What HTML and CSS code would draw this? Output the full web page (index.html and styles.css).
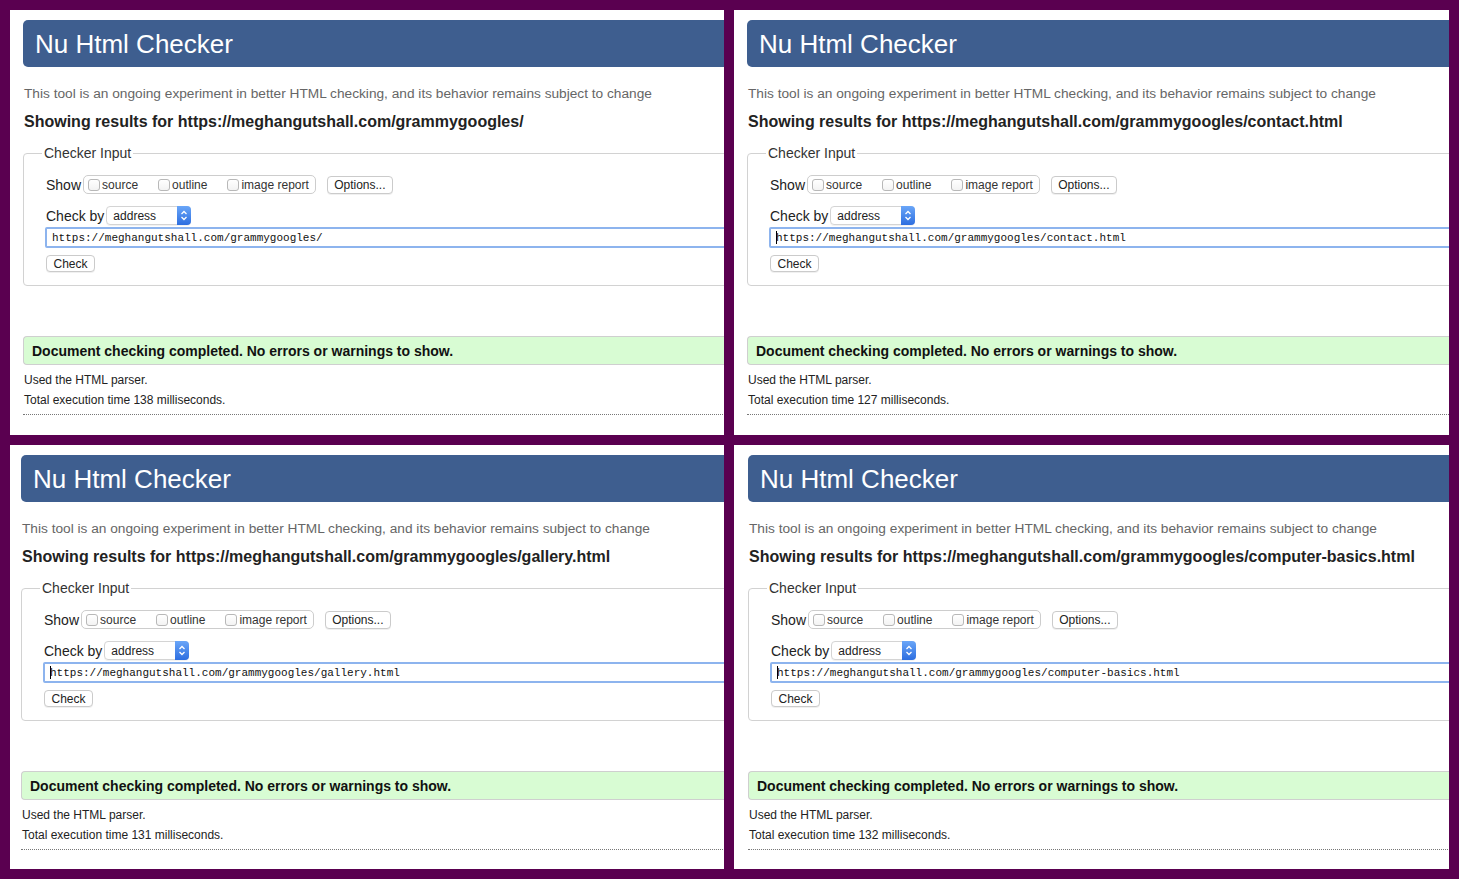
FILE: index.html
```html
<!DOCTYPE html>
<html lang="en">
<head>
<meta charset="utf-8">
<title>Nu Html Checker results</title>
<link rel="stylesheet" href="styles.css">
</head>
<body>
<main class="grid">

  <section class="panel p-tl">
    <div class="page">
      <header class="masthead"><h1>Nu Html Checker</h1></header>
      <p class="tagline">This tool is an ongoing experiment in better HTML checking, and its behavior remains subject to change</p>
      <h2 class="results">Showing results for https://meghangutshall.com/grammygoogles/</h2>
      <fieldset class="checker">
        <legend>Checker Input</legend>
        <div class="row">
          <span class="lbl">Show</span>
          <span class="group">
            <span class="opt"><span class="cb"></span>source</span>
            <span class="opt"><span class="cb"></span>outline</span>
            <span class="opt"><span class="cb"></span>image report</span>
          </span>
          <span class="btn opts">Options...</span>
        </div>
        <div class="row by-row">
          <span class="lbl">Check by</span>
          <span class="select">address<span class="stepper"><svg width="8" height="13" viewBox="0 0 8 13"><path d="M1.5 5 L4 2.5 L6.5 5 M1.5 8 L4 10.5 L6.5 8" fill="none" stroke="#fff" stroke-width="1.3"/></svg></span></span>
        </div>
        <div class="urlbox">https://meghangutshall.com/grammygoogles/</div>
        <span class="btn check">Check</span>
      </fieldset>
      <div class="success">Document checking completed. No errors or warnings to show.</div>
      <div class="details">
        <p>Used the HTML parser.</p>
        <p>Total execution time 138 milliseconds.</p>
      </div>
    </div>
  </section>

  <section class="panel p-tr">
    <div class="page">
      <header class="masthead"><h1>Nu Html Checker</h1></header>
      <p class="tagline">This tool is an ongoing experiment in better HTML checking, and its behavior remains subject to change</p>
      <h2 class="results">Showing results for https://meghangutshall.com/grammygoogles/contact.html</h2>
      <fieldset class="checker">
        <legend>Checker Input</legend>
        <div class="row">
          <span class="lbl">Show</span>
          <span class="group">
            <span class="opt"><span class="cb"></span>source</span>
            <span class="opt"><span class="cb"></span>outline</span>
            <span class="opt"><span class="cb"></span>image report</span>
          </span>
          <span class="btn opts">Options...</span>
        </div>
        <div class="row by-row">
          <span class="lbl">Check by</span>
          <span class="select">address<span class="stepper"><svg width="8" height="13" viewBox="0 0 8 13"><path d="M1.5 5 L4 2.5 L6.5 5 M1.5 8 L4 10.5 L6.5 8" fill="none" stroke="#fff" stroke-width="1.3"/></svg></span></span>
        </div>
        <div class="urlbox"><span class="caret"></span>https://meghangutshall.com/grammygoogles/contact.html</div>
        <span class="btn check">Check</span>
      </fieldset>
      <div class="success">Document checking completed. No errors or warnings to show.</div>
      <div class="details">
        <p>Used the HTML parser.</p>
        <p>Total execution time 127 milliseconds.</p>
      </div>
    </div>
  </section>

  <section class="panel p-bl">
    <div class="page">
      <header class="masthead"><h1>Nu Html Checker</h1></header>
      <p class="tagline">This tool is an ongoing experiment in better HTML checking, and its behavior remains subject to change</p>
      <h2 class="results">Showing results for https://meghangutshall.com/grammygoogles/gallery.html</h2>
      <fieldset class="checker">
        <legend>Checker Input</legend>
        <div class="row">
          <span class="lbl">Show</span>
          <span class="group">
            <span class="opt"><span class="cb"></span>source</span>
            <span class="opt"><span class="cb"></span>outline</span>
            <span class="opt"><span class="cb"></span>image report</span>
          </span>
          <span class="btn opts">Options...</span>
        </div>
        <div class="row by-row">
          <span class="lbl">Check by</span>
          <span class="select">address<span class="stepper"><svg width="8" height="13" viewBox="0 0 8 13"><path d="M1.5 5 L4 2.5 L6.5 5 M1.5 8 L4 10.5 L6.5 8" fill="none" stroke="#fff" stroke-width="1.3"/></svg></span></span>
        </div>
        <div class="urlbox"><span class="caret"></span>https://meghangutshall.com/grammygoogles/gallery.html</div>
        <span class="btn check">Check</span>
      </fieldset>
      <div class="success">Document checking completed. No errors or warnings to show.</div>
      <div class="details">
        <p>Used the HTML parser.</p>
        <p>Total execution time 131 milliseconds.</p>
      </div>
    </div>
  </section>

  <section class="panel p-br">
    <div class="page">
      <header class="masthead"><h1>Nu Html Checker</h1></header>
      <p class="tagline">This tool is an ongoing experiment in better HTML checking, and its behavior remains subject to change</p>
      <h2 class="results">Showing results for https://meghangutshall.com/grammygoogles/computer-basics.html</h2>
      <fieldset class="checker">
        <legend>Checker Input</legend>
        <div class="row">
          <span class="lbl">Show</span>
          <span class="group">
            <span class="opt"><span class="cb"></span>source</span>
            <span class="opt"><span class="cb"></span>outline</span>
            <span class="opt"><span class="cb"></span>image report</span>
          </span>
          <span class="btn opts">Options...</span>
        </div>
        <div class="row by-row">
          <span class="lbl">Check by</span>
          <span class="select">address<span class="stepper"><svg width="8" height="13" viewBox="0 0 8 13"><path d="M1.5 5 L4 2.5 L6.5 5 M1.5 8 L4 10.5 L6.5 8" fill="none" stroke="#fff" stroke-width="1.3"/></svg></span></span>
        </div>
        <div class="urlbox"><span class="caret"></span>https://meghangutshall.com/grammygoogles/computer-basics.html</div>
        <span class="btn check">Check</span>
      </fieldset>
      <div class="success">Document checking completed. No errors or warnings to show.</div>
      <div class="details">
        <p>Used the HTML parser.</p>
        <p>Total execution time 132 milliseconds.</p>
      </div>
    </div>
  </section>

</main>
</body>
</html>
```

FILE: styles.css
```css
html, body {
  margin: 0;
  padding: 0;
}
body {
  background: #5a0050;
  font-family: "Liberation Sans", Arial, Helvetica, sans-serif;
  color: #222;
}
.grid {
  box-sizing: border-box;
  width: 1459px;
  height: 879px;
  padding: 10px;
  display: grid;
  grid-template-columns: 714px 715px;
  grid-template-rows: 425px 424px;
  gap: 10px;
}
.panel {
  background: #fff;
  overflow: hidden;
  padding-top: 10px;
  padding-left: 13px;
}
.p-bl { padding-left: 11px; }
.p-br { padding-left: 14px; }
.page {
  width: 820px;
}
.masthead {
  height: 47px;
  background: #3e5e8f;
  border-radius: 5px 0 0 5px;
  display: flex;
  align-items: center;
  padding-left: 12px;
}
.masthead h1 {
  margin: 0;
  font-size: 26px;
  line-height: 1;
  font-weight: normal;
  color: #fff;
}
.tagline {
  margin: 17px 0 0;
  padding-left: 1px;
  font-size: 13.7px;
  line-height: 20px;
  color: #666;
}
.results {
  margin: 8px 0 0;
  padding-left: 1px;
  font-size: 16px;
  line-height: 20px;
  font-weight: bold;
  color: #222;
  white-space: nowrap;
}
.checker {
  margin: 12px 0 0;
  border: 1px solid #d2d2d2;
  border-radius: 4px;
  padding: 13px 0 13px 22px;
  min-width: 0;
}
.checker legend {
  margin-left: -4px;
  padding: 0 2px;
  font-size: 14px;
  line-height: 18px;
  color: #333;
}
.row {
  display: flex;
  align-items: center;
  height: 19px;
}
.lbl {
  font-size: 14px;
  color: #222;
  margin-right: 2px;
}
.by-row {
  margin-top: 12px;
}
.group {
  display: flex;
  align-items: center;
  box-sizing: border-box;
  height: 19px;
  border: 1px solid #cdcdcd;
  border-radius: 5px;
  padding: 0 6px 0 4px;
  font-size: 12px;
  color: #333;
}
.opt {
  display: flex;
  align-items: center;
  margin-right: 20px;
}
.opt:last-child {
  margin-right: 0;
}
.cb {
  box-sizing: border-box;
  width: 12px;
  height: 12px;
  border: 1px solid #b8b8b8;
  border-radius: 3px;
  background: linear-gradient(#fff, #f3f3f3);
  margin-right: 2px;
}
.btn {
  display: flex;
  align-items: center;
  justify-content: center;
  box-sizing: border-box;
  border: 1px solid #cbcbcb;
  border-radius: 4px;
  background: #fff;
  box-shadow: 0 1px 0 rgba(0, 0, 0, 0.06);
  font-size: 12px;
  color: #222;
}
.opts {
  width: 66px;
  height: 18px;
  margin-left: 11px;
}
.check {
  width: 49px;
  height: 17px;
  margin-top: 7px;
}
.select {
  display: flex;
  align-items: center;
  justify-content: space-between;
  box-sizing: border-box;
  width: 85px;
  height: 19px;
  border: 1px solid #d4d4d4;
  border-radius: 4px;
  padding-left: 6px;
  font-size: 12px;
  color: #222;
  box-shadow: 0 1px 0 rgba(0, 0, 0, 0.05);
}
.stepper {
  display: flex;
  align-items: center;
  justify-content: center;
  width: 14px;
  height: 19px;
  margin: -1px -1px -1px 0;
  background: linear-gradient(#6aa6f8, #2d6ee0);
  border-radius: 0 4px 4px 0;
}
.urlbox {
  display: flex;
  align-items: center;
  box-sizing: border-box;
  height: 21px;
  margin-top: 2px;
  margin-left: -1px;
  border: 2px solid #8db4ee;
  border-radius: 2px;
  padding-left: 5px;
  font-family: "Liberation Mono", "Courier New", monospace;
  font-size: 11px;
  color: #111;
  white-space: nowrap;
}
.caret {
  display: inline-block;
  width: 1px;
  height: 13px;
  background: #000;
  margin-right: -1px;
}
.success {
  display: flex;
  align-items: center;
  box-sizing: border-box;
  height: 29px;
  margin-top: 50px;
  border: 1px solid #cfcfcf;
  border-right: 0;
  border-radius: 4px 0 0 4px;
  background: #d8fcd3;
  padding-left: 8px;
  font-size: 14px;
  font-weight: bold;
  color: #111;
}
.details {
  margin-top: 5px;
  padding-left: 1px;
  padding-bottom: 4px;
  border-bottom: 1px dotted #777;
  font-size: 12px;
  color: #222;
}
.details p {
  margin: 0;
  line-height: 20px;
}
```
